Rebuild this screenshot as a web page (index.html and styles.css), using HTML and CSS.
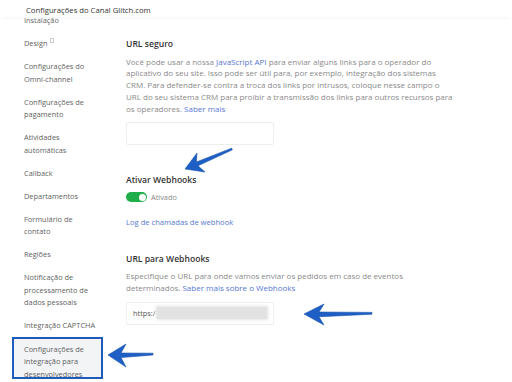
FILE: index.html
```html
<!doctype html>
<html>
  <head>
    <meta charset="utf-8">
    <title>Configurações do Canal Glitch.com</title>
    <link rel="stylesheet" href="styles.css">
  </head>
  <body>
    <div class="page">
      <header class="topbar">Configurações do Canal Glitch.com</header>

      <div class="layout">
        <nav class="sidebar">
          <a class="nav-item" href="#">Instalação</a>
          <a class="nav-item" href="#">Design <span class="tofu"></span></a>
          <a class="nav-item" href="#">Configurações do<br>Omni-channel</a>
          <a class="nav-item" href="#">Configurações de<br>pagamento</a>
          <a class="nav-item" href="#">Atividades<br>automáticas</a>
          <a class="nav-item" href="#">Callback</a>
          <a class="nav-item" href="#">Departamentos</a>
          <a class="nav-item" href="#">Formulário de<br>contato</a>
          <a class="nav-item" href="#">Regiões</a>
          <a class="nav-item" href="#">Notificação de<br>processamento de<br>dados pessoais</a>
          <a class="nav-item" href="#">Integração CAPTCHA</a>
          <a class="nav-item active" href="#">Configurações de<br>integração para<br>desenvolvedores</a>
        </nav>

        <main class="content">
          <section class="block">
            <h3 class="block-title">URL seguro</h3>
            <p class="block-text">Você pode usar a nossa <a href="#">JavaScript API</a> para enviar alguns links para o operador do<br>
              aplicativo do seu site. Isso pode ser útil para, por exemplo, integração dos sistemas<br>
              CRM. Para defender-se contra a troca dos links por intrusos, coloque nesse campo o<br>
              URL do seu sistema CRM para proibir a transmissão dos links para outros recursos para<br>
              os operadores. <a href="#">Saber mais</a></p>
            <div class="field"></div>
          </section>

          <section class="block webhooks">
            <h3 class="block-title">Ativar Webhooks</h3>
            <div class="switch-row">
              <span class="switch"><span class="knob"></span></span>
              <span class="switch-label">Ativado</span>
            </div>
            <a class="log-link" href="#">Log de chamadas de webhook</a>
          </section>

          <section class="block hook-url">
            <h3 class="block-title">URL para Webhooks</h3>
            <p class="block-text">Especifique o URL para onde vamos enviar os pedidos em caso de eventos determinados. <a href="#">Saber mais sobre o Webhooks</a></p>
            <div class="field">
              <span class="field-value">https:/</span>
              <span class="redacted"></span>
            </div>
          </section>
        </main>
      </div>

      <!-- annotation arrows drawn over the screenshot -->
      <svg class="arrows" width="512" height="382" viewBox="0 0 512 382">
        <polygon points="185,169 197,153 196.4,162 231.6,148.2 232.4,149.8 198,165.8 205,172"/>
        <polygon points="304,314 324,304 319,312 372,312.4 372,314.2 319,316.8 324,325"/>
        <polygon points="108,355 126,344 121,353 153,353.2 153,355 121,357.6 126,367"/>
      </svg>
    </div>
  </body>
</html>
```

FILE: styles.css
```css
* {
    box-sizing: border-box;
}

body {
    margin: 0;
    background: #fff;
    font-family: "Open Sans", "Noto Sans", sans-serif;
    color: #333;
}

.page {
    position: relative;
    width: 512px;
    height: 382px;
    overflow: hidden;
}

.topbar {
    position: relative;
    z-index: 1;
    height: 17px;
    padding: 5px 0 0 26px;
    background: #fff;
    box-shadow: 0 3px 4px -3px #f0f0f0;
    font-size: 7.7px;
    line-height: 10px;
    color: #333;
}

.layout {
    display: flex;
    gap: 23px;
}

/* sidebar */

.sidebar {
    display: flex;
    flex-direction: column;
    flex-shrink: 0;
    width: 103px;
    margin-top: -8px;
    padding-left: 12px;
}

.nav-item {
    display: block;
    border: 2px solid transparent;
    padding: 3.25px 1px 3.25px 10px;
    font-size: 7.4px;
    line-height: 12.5px;
    color: #5f5f5f;
    text-decoration: none;
    white-space: nowrap;
}

.tofu {
    display: inline-block;
    width: 4px;
    height: 5px;
    margin-left: 1px;
    vertical-align: 3px;
    border: 1px solid #ccc;
}

.nav-item.active {
    height: 42px;
    overflow: hidden;
    padding-top: 3.75px;
    border-color: #1d5bbf;
    background: #f3f4f6;
}

/* content */

.content {
    flex-shrink: 0;
    width: 330px;
    padding-top: 21px;
}

.block-title {
    margin: 0 0 5.5px;
    font-size: 8.6px;
    line-height: 12px;
    font-weight: 600;
    color: #333;
}

.block-text {
    margin: 0;
    font-size: 8px;
    line-height: 11.75px;
    color: #8a8a8a;
}

.hook-url .block-text {
    width: 316px;
}

.block-text a,
.log-link {
    color: #5677d4;
    text-decoration: none;
}

.field {
    display: flex;
    align-items: center;
    width: 148px;
    height: 23px;
    margin-top: 7.5px;
    padding-left: 6px;
    border: 1px solid #eeeeee;
    border-radius: 2px;
    background: #fff;
}

.webhooks {
    margin-top: 29px;
}

.switch-row {
    display: flex;
    align-items: center;
    gap: 4px;
    height: 12px;
}

.switch {
    display: flex;
    justify-content: flex-end;
    align-items: center;
    width: 21px;
    height: 10px;
    padding: 0 1.5px;
    border-radius: 5px;
    background: #1fae4a;
}

.knob {
    width: 7px;
    height: 7px;
    border-radius: 50%;
    background: #fff;
}

.switch-label {
    font-size: 7.4px;
    color: #888;
}

.log-link {
    display: block;
    margin-top: 12.5px;
    font-size: 7.6px;
    line-height: 12px;
}

.hook-url {
    margin-top: 25px;
}

.hook-url .field {
    margin-top: 8px;
}

.field-value {
    font-size: 7.4px;
    color: #555;
}

.redacted {
    width: 110px;
    height: 12px;
    margin-left: 1px;
    background: #e2e2e2;
    box-shadow: 0 0 3px 1px #e2e2e2;
}

/* annotations */

.arrows {
    position: absolute;
    top: 0;
    left: 0;
    pointer-events: none;
}

.arrows polygon {
    fill: #1d5fc4;
    stroke: #1a52ad;
    stroke-width: 0.6;
    stroke-linejoin: round;
}
```
